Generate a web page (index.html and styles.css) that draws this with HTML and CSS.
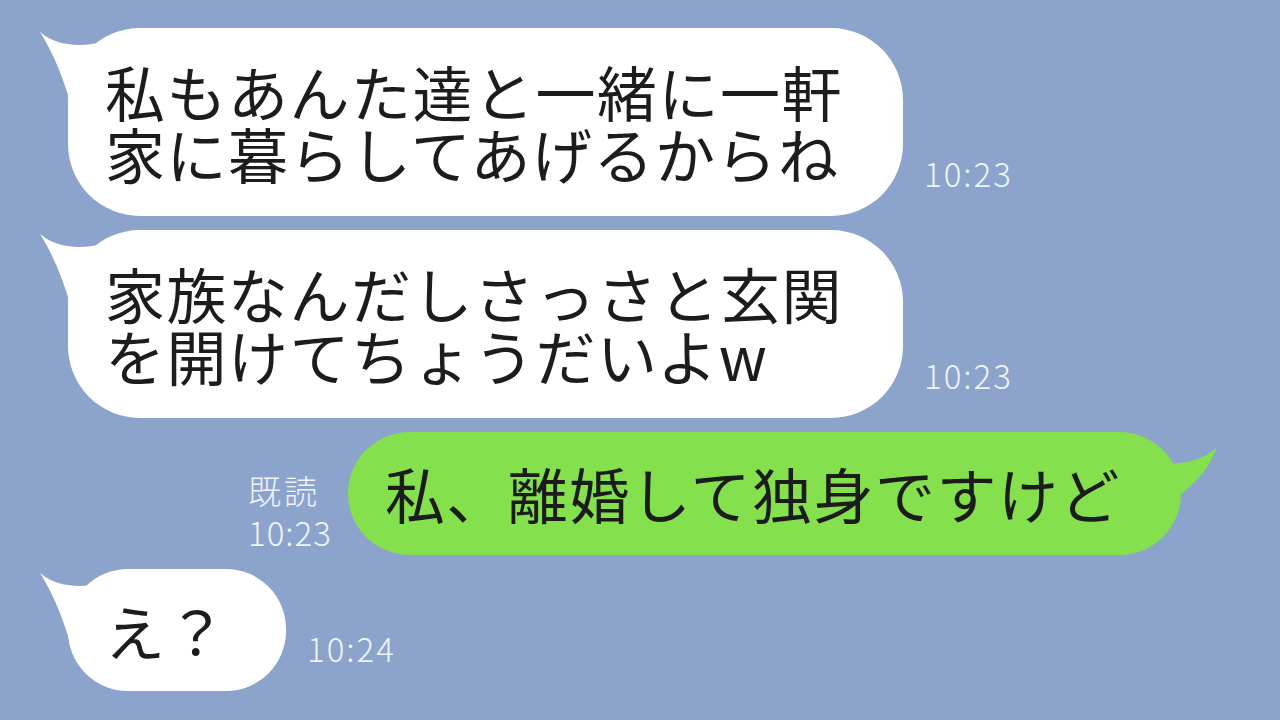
FILE: index.html
```html
<!DOCTYPE html>
<html lang="ja">
<head>
    <meta charset="UTF-8">
    <title>トーク</title>
    <link rel="stylesheet" href="styles.css">
</head>
<body>

<div class="chat">

    <!-- 相手 -->
    <div class="row">
        <div class="bubble white">
            <svg class="tail tail-left" width="90" height="90" viewBox="0 0 90 90"><path d="M2,4 C20,20 50,20 80,10 L80,80 L34,80 C26,52 16,26 2,4 Z"/></svg>
            <div class="text"><span class="line">私もあんた達と一緒に一軒</span><span class="line">家に暮らしてあげるからね</span></div>
        </div>
        <div class="meta">10:23</div>
    </div>

    <div class="row">
        <div class="bubble white">
            <svg class="tail tail-left" width="90" height="90" viewBox="0 0 90 90"><path d="M2,4 C20,20 50,20 80,10 L80,80 L34,80 C26,52 16,26 2,4 Z"/></svg>
            <div class="text"><span class="line">家族なんだしさっさと玄関</span><span class="line">を開けてちょうだいよw</span></div>
        </div>
        <div class="meta">10:23</div>
    </div>

    <!-- 自分 -->
    <div class="row mine">
        <div class="meta read">
            <span class="read-label">既読</span>
            <span>10:23</span>
        </div>
        <div class="bubble green">
            <svg class="tail tail-right" width="90" height="90" viewBox="0 0 90 90"><path d="M86,15 C70,30 48,34 20,30 L20,80 L46,80 L50,62 C66,50 78,36 86,15 Z"/></svg>
            <div class="text"><span class="line">私、離婚して独身ですけど</span></div>
        </div>
    </div>

    <div class="row">
        <div class="bubble white small">
            <svg class="tail tail-left" width="90" height="90" viewBox="0 0 90 90"><path d="M2,4 C20,20 50,20 80,10 L80,80 L34,80 C26,52 16,26 2,4 Z"/></svg>
            <div class="text"><span class="line">え？</span></div>
        </div>
        <div class="meta">10:24</div>
    </div>

</div>

</body>
</html>
```

FILE: styles.css
```css
body {
    margin: 0;
    padding: 0;
    background-color: #8ca3cb;
    font-family: 'Noto Sans CJK JP', 'Noto Sans', sans-serif;
    overflow: hidden;
}

.chat {
    display: flex;
    flex-direction: column;
    align-items: flex-start;
    gap: 14px;
    padding: 28px 0 0 68px;
}

.row {
    display: flex;
    align-items: flex-end;
    gap: 21px;
}

/* 吹き出し */
.bubble {
    position: relative;
    padding: 32px 60px 32px 37px;
    border-radius: 72px;
}

/* しっぽより上に文字を置く */
.bubble .text {
    position: relative;
    font-size: 60px;
    line-height: 62px;
    letter-spacing: 1.5px;
    color: #1c1c1c;
    white-space: nowrap;
}

.bubble .line {
    display: block;
    height: 62px;
}

.bubble.white {
    background-color: #ffffff;
}

.bubble.small {
    padding: 30px 58px 30px 37px;
    border-radius: 60px;
}

.bubble.green {
    background-color: #84e04c;
    padding: 30px 60px 31px 37px;
    border-radius: 62px;
}

/* しっぽ */
.tail {
    position: absolute;
    top: 0;
}

.tail-left {
    left: -30px;
}

.tail-left path {
    fill: #ffffff;
}

.tail-right {
    right: -40px;
}

.tail-right path {
    fill: #84e04c;
}

/* 時刻・既読 */
.meta {
    font-size: 33px;
    font-weight: 300;
    line-height: 36px;
    letter-spacing: 2px;
    color: #eff3fb;
    padding-bottom: 25px;
}

.row.mine {
    margin-left: 180px;
    gap: 16px;
}

.meta.read {
    display: flex;
    flex-direction: column;
    line-height: 42px;
    letter-spacing: 1px;
    padding-bottom: 2px;
}

.read-label {
    letter-spacing: 3px;
}
```
